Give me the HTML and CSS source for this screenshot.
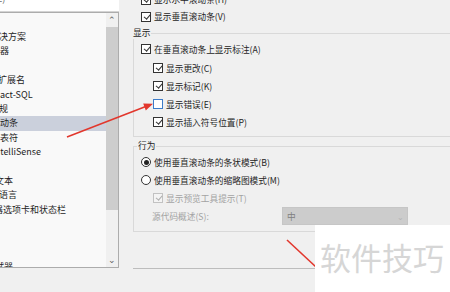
FILE: index.html
```html
<!DOCTYPE html>
<html lang="zh-CN">
<head>
  <meta charset="UTF-8">
  <title>选项 - 滚动条</title>
  <meta name="viewport" content="width=device-width, initial-scale=1">
  <link rel="stylesheet" href="styles.css">
</head>
<body>
  <div class="screen">

    <!-- colonna sinistra: ricerca + albero -->
    <div class="nav">
      <div class="search">
        <span class="search-text">搜索选项(Ctrl+E)</span>
        <svg class="search-icon" width="10" height="10" viewBox="0 0 10 10">
          <circle cx="6" cy="-1" r="3.2" fill="none" stroke="#444" stroke-width="1.2"/>
          <line x1="3.6" y1="1.4" x2="0.8" y2="4.2" stroke="#444" stroke-width="1.4"/>
        </svg>
      </div>
      <div class="tree">
        <ul class="tree-list">
          <li><span class="shift-10">解决方案</span></li>
          <li><span class="shift-18">编辑器</span></li>
          <li></li>
          <li><span class="shift-20">文件扩展名</span></li>
          <li><span class="shift-23">Transact-SQL</span></li>
          <li><span class="shift-10">常规</span></li>
          <li class="selected"><span class="shift-9">滚动条</span></li>
          <li><span class="shift-9">制表符</span></li>
          <li><span class="shift-8">IntelliSense</span></li>
          <li></li>
          <li><span class="shift-14">纯文本</span></li>
          <li><span class="shift-19">所有语言</span></li>
          <li><span class="shift-24">编辑器选项卡和状态栏</span></li>
          <li></li>
          <li></li>
          <li></li>
          <li><span class="shift-14">调试器</span></li>
        </ul>
        <div class="scrollbar">
          <span class="scroll-arrow">&#8963;</span>
          <div class="scroll-track"><div class="scroll-thumb"></div></div>
          <span class="scroll-arrow">&#8964;</span>
        </div>
      </div>
    </div>

    <!-- colonna destra: opzioni -->
    <div class="options">
      <div class="opt-row top"><span class="cb checked"></span>显示水平滚动条(H)</div>
      <div class="opt-row top"><span class="cb checked"></span>显示垂直滚动条(V)</div>

      <fieldset class="group">
        <legend class="group-title first">显示</legend>
        <div class="opt-row first-row"><span class="cb checked"></span>在垂直滚动条上显示标注(A)</div>
        <div class="opt-row sub"><span class="cb checked"></span>显示更改(C)</div>
        <div class="opt-row sub"><span class="cb checked"></span>显示标记(K)</div>
        <div class="opt-row sub"><span class="cb focus"></span>显示错误(E)</div>
        <div class="opt-row sub"><span class="cb checked"></span>显示插入符号位置(P)</div>
      </fieldset>

      <fieldset class="group behaviour">
        <legend class="group-title">行为</legend>
        <div class="opt-row"><span class="rb on"></span>使用垂直滚动条的条状模式(B)</div>
        <div class="opt-row"><span class="rb"></span>使用垂直滚动条的缩略图模式(M)</div>
        <div class="opt-row sub disabled"><span class="cb checked"></span>显示预览工具提示(T)</div>
        <div class="opt-row disabled select-row">
          <span class="select-label">源代码概述(S):</span>
          <div class="select">
            <span>中</span>
            <span class="select-arrow">&#8964;</span>
          </div>
        </div>
      </fieldset>

      <div class="separator"></div>
    </div>

    <!-- frecce rosse sopra il contenuto -->
    <svg class="marks" width="450" height="292" viewBox="0 0 450 292">
      <line x1="67" y1="137" x2="147" y2="106" stroke="#e2372d" stroke-width="1.6"/>
      <polygon points="153,103.8 145.8,110.4 143.2,103.4" fill="#e2372d"/>
      <line x1="287" y1="240" x2="316" y2="267" stroke="#e2372d" stroke-width="1.6"/>
    </svg>

    <div class="watermark">软件技巧</div>
  </div>
</body>
</html>
```

FILE: styles.css
```css
/* pagina */
body {
  margin: 0;
  background: #f0f0f0;
  font-family: "Noto Sans CJK SC", "Noto Sans", sans-serif;
  font-size: 9px;
  color: #1e1e1e;
}

.screen {
  position: relative;
  width: 450px;
  height: 292px;
  overflow: hidden;
  display: flex;
}

/* colonna sinistra */
.nav {
  width: 119px;
  flex-shrink: 0;
}

.search {
  height: 12px;
  background: #fff;
  border-bottom: 1px solid #d4d4d4;
  box-sizing: border-box;
  display: flex;
  align-items: flex-end;
  justify-content: space-between;
  overflow: hidden;
}

.search-text {
  margin-left: -62px;
  margin-bottom: 6px;
  line-height: 12px;
  color: #6d6d6d;
}

.search-icon {
  margin-right: 6px;
  margin-bottom: 7px;
}

.tree {
  height: 256px;
  background: #f9f9f9;
  border: 1px solid #acacac;
  border-left: none;
  box-sizing: border-box;
  display: flex;
}

.tree-list {
  flex: 1;
  list-style: none;
  margin: 0;
  padding: 17px 0 0;
  overflow: hidden;
}

.tree-list li {
  height: 14.4px;
  line-height: 14.4px;
  white-space: nowrap;
}

.tree-list li.selected {
  background: #cbd0dc;
}

.shift-8 { margin-left: -8px; }
.shift-9 { margin-left: -9px; }
.shift-10 { margin-left: -10px; }
.shift-14 { margin-left: -14px; }
.shift-18 { margin-left: -18px; }
.shift-19 { margin-left: -19px; }
.shift-20 { margin-left: -20px; }
.shift-23 { margin-left: -23px; }
.shift-24 { margin-left: -24px; }

.scrollbar {
  width: 12px;
  background: #f0f0f0;
  display: flex;
  flex-direction: column;
  align-items: center;
}

.scroll-arrow {
  height: 14px;
  line-height: 14px;
  font-size: 9px;
  color: #606060;
}

.scroll-track {
  flex: 1;
  width: 100%;
  display: flex;
  flex-direction: column;
}

.scroll-thumb {
  height: 183px;
  background: #cdcdcd;
}

/* colonna destra */
.options {
  flex: 1;
  margin-top: -9px;
  padding-left: 14px;
  font-size: 8.7px;
}

.opt-row {
  height: 18px;
  display: flex;
  align-items: center;
  gap: 3px;
  white-space: nowrap;
}

.opt-row.top {
  height: 17px;
  padding-left: 8px;
}

.opt-row.sub {
  padding-left: 12px;
}

.opt-row.first-row {
  margin-bottom: 1px;
}

.opt-row.disabled {
  color: #a3a3a3;
}

/* caselle di controllo e radio */
.cb {
  position: relative;
  width: 10px;
  height: 10px;
  box-sizing: border-box;
  border: 1px solid #333;
  background: #fff;
  flex-shrink: 0;
}

.cb.checked::after {
  content: "";
  position: absolute;
  left: 2.6px;
  top: 0.4px;
  width: 2.6px;
  height: 5.4px;
  border-right: 1.2px solid #333;
  border-bottom: 1.2px solid #333;
  transform: rotate(40deg);
}

.cb.focus {
  border-color: #3d7cc9;
}

.disabled .cb {
  border-color: #c2c2c2;
  background: #f4f4f4;
}

.disabled .cb.checked::after {
  border-color: #b0b0b0;
}

.rb {
  width: 10px;
  height: 10px;
  box-sizing: border-box;
  border: 1px solid #333;
  border-radius: 50%;
  background: #fff;
  display: flex;
  align-items: center;
  justify-content: center;
  flex-shrink: 0;
}

.rb.on::after {
  content: "";
  width: 5px;
  height: 5px;
  border-radius: 50%;
  background: #222;
}

/* gruppi */
.group {
  width: 400px;
  margin: 2px 0 0;
  padding: 1px 7px 5px;
  border: 1px solid #d9d9d9;
}

.group-title {
  padding: 0 1px;
  margin-left: -9px;
  line-height: 12px;
  background: #f0f0f0;
}

.behaviour {
  margin-top: 3px;
  padding-bottom: 6px;
}

.behaviour .group-title {
  margin-left: -4px;
}

.select-label {
  width: 138px;
  padding-left: 11px;
  box-sizing: border-box;
}

.select {
  width: 126px;
  height: 18px;
  box-sizing: border-box;
  background: #cccccc;
  border: 1px solid #c6c6c6;
  display: flex;
  align-items: center;
  justify-content: space-between;
  padding: 0 3px 0 4px;
  color: #808080;
}

.select-arrow {
  color: #b4b4b4;
  font-size: 8px;
}

.separator {
  width: 400px;
  margin-top: 36px;
  border-top: 1px solid #bdbdbd;
}

/* sovrapposizioni */
.marks {
  position: absolute;
  left: 0;
  top: 0;
  pointer-events: none;
}

.watermark {
  position: absolute;
  left: 315px;
  top: 225px;
  width: 135px;
  height: 67px;
  box-sizing: border-box;
  padding: 16px 0 0 5px;
  background: #fff;
  font-size: 31px;
  line-height: 31px;
  color: #d6d6d6;
  white-space: nowrap;
}
```
